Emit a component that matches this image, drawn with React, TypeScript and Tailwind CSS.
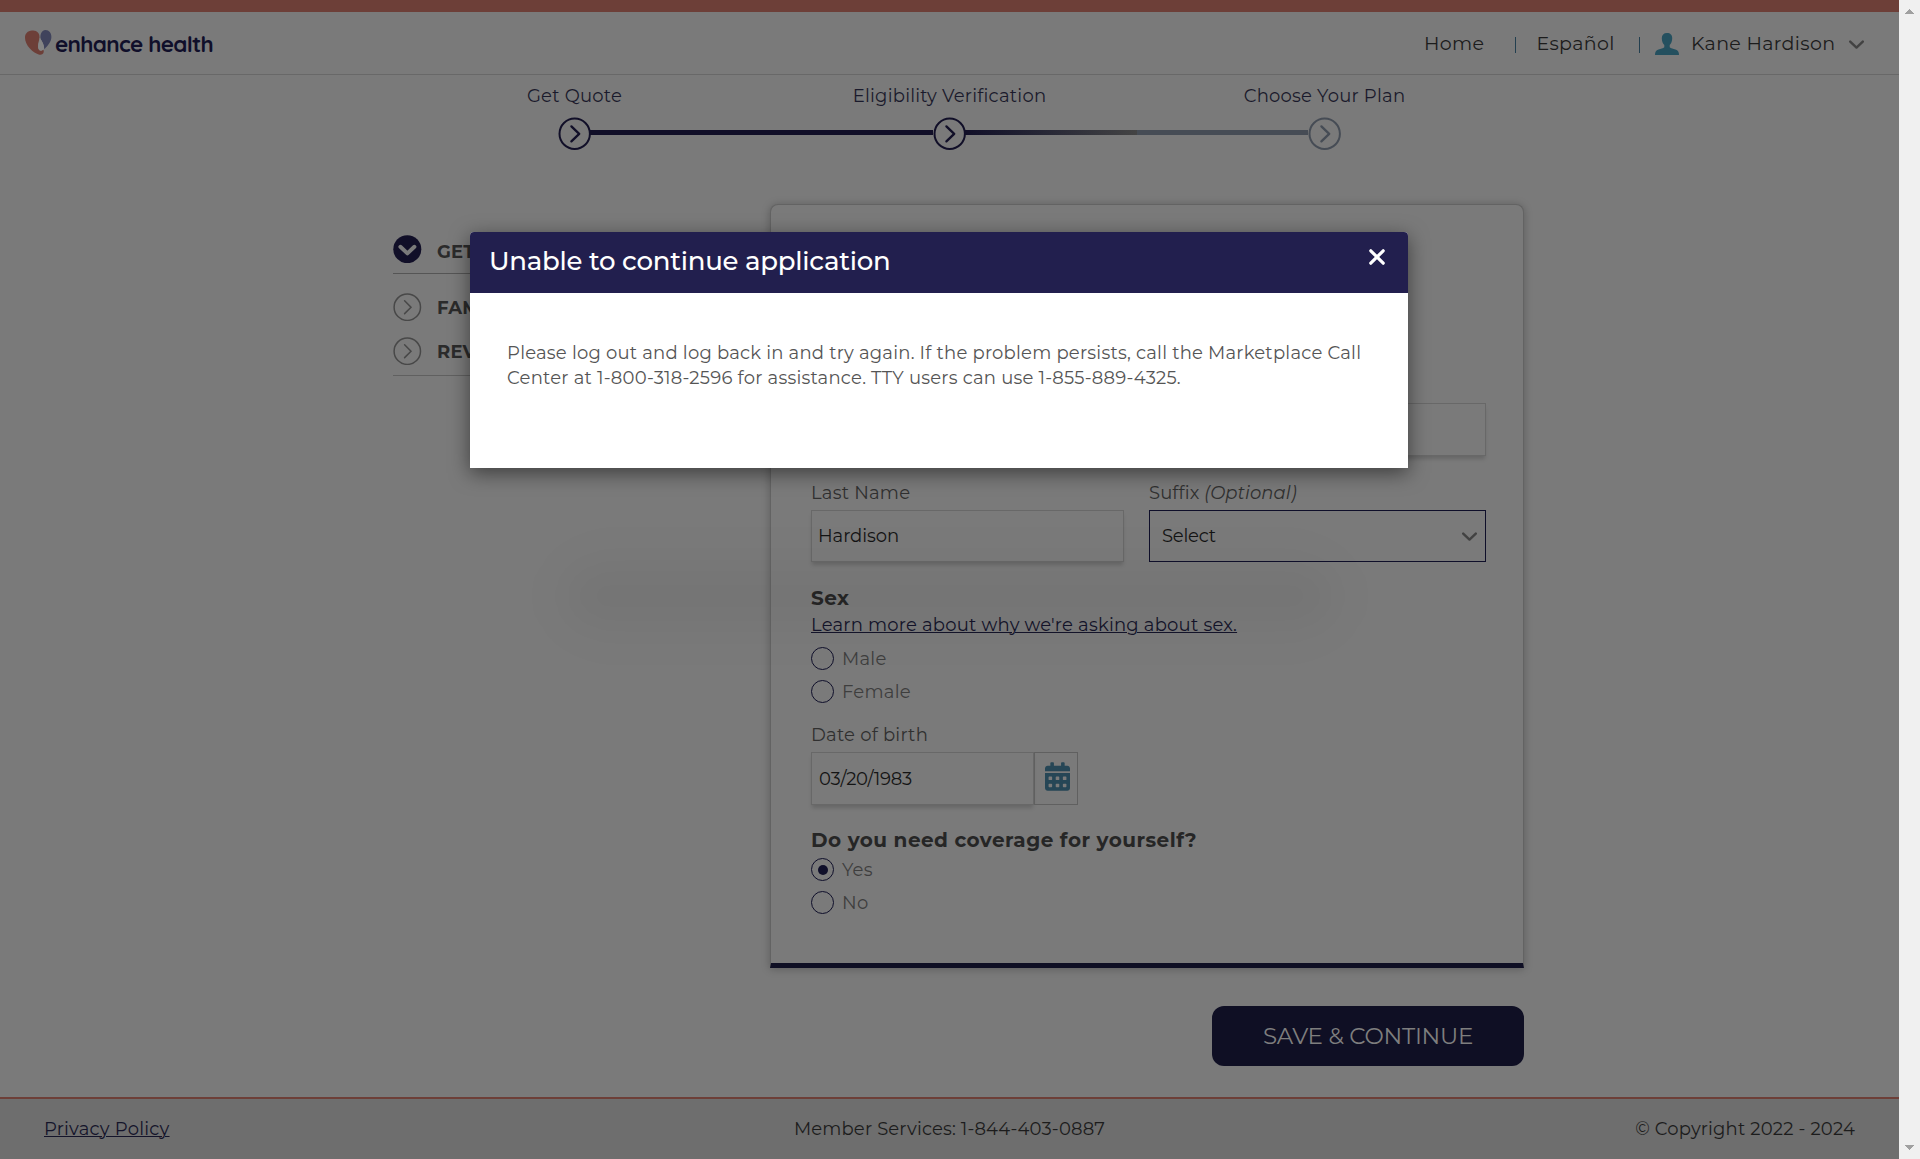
import React from 'react';
import { FaCalendarAlt } from 'react-icons/fa';

function StepCircle({ color }: { color: string }) {
  return (
    <svg width="33" height="33" viewBox="0 0 33 33" fill="none" stroke={color} strokeWidth="2" className="shrink-0">
      <circle cx="16.7" cy="16.8" r="15.2" />
      <path d="M13.4 9.4 21.200 16.900l-7.800 7.500" strokeWidth="2.3" strokeLinecap="round" strokeLinejoin="round" />
    </svg>
  );
}

function SideItem({ label, active = false }: { label: string; active?: boolean }) {
  return (
    <div className="flex h-7 items-center">
      <svg width="29" height="28" viewBox="0 0 29 28" fill="none" className="shrink-0">
        {active ? (
          <>
            <circle cx="14.3" cy="14.2" r="14" fill="#110f28" />
            <path d="m7.4 11.8 7 6.6 7-6.6" stroke="#7a7a7a" strokeWidth="4" strokeLinecap="round" strokeLinejoin="round" />
          </>
        ) : (
          <>
            <circle cx="14.3" cy="14.2" r="13.2" stroke="#484848" strokeWidth="1.5" />
            <path d="m11.6 7.8 6.4 6.4-6.4 6.4" stroke="#484848" strokeWidth="1.5" strokeLinecap="round" />
          </>
        )}
      </svg>
      <span className={`ml-[15px] text-[18px] font-bold leading-6 tracking-[0.2px] text-[#2b2b2b] ${active ? 'mt-[5px]' : 'mt-[2px]'}`}>{label}</span>
    </div>
  );
}

function Chevron() {
  return (
    <svg width="16" height="10" viewBox="0 0 16 10" fill="none" className="shrink-0">
      <path d="m2.200 1.600 6.300 6 6.300-6" stroke="#424242" strokeWidth="2.400" strokeLinecap="round" strokeLinejoin="round" />
    </svg>
  );
}

function Radio({ label, checked = false }: { label: string; checked?: boolean }) {
  return (
    <div className="flex h-[23px] items-center">
      <span className="flex size-[23px] items-center justify-center rounded-full border border-[#0f0f2a]">
        {checked && <span className="size-[10px] rounded-full bg-[#0f0f2a]" />}
      </span>
      <span className="ml-[8px] tracking-[0.250px] text-[#3e3e3e]">{label}</span>
    </div>
  );
}

const fieldBox = 'border border-[#686868] shadow-[0_4px_4px_-1px_rgba(0,0,0,0.16)]';

export default function App() {
  return (
    <div className="relative flex h-[1159px] w-[1920px] overflow-hidden bg-[#7a7a7a] font-['Montserrat','Inter',sans-serif] text-[18px] font-normal leading-6 tracking-[0.220px] text-[#1c1c1c]">
      <div className="flex w-[1899px] flex-col">
        <div className="h-3 bg-[#6d3f38]" />
        <header className="flex h-[63px] items-center border-b border-[#686868] pl-[25px] text-[19px] tracking-[0.350px]">
          <svg width="27" height="26" viewBox="0 0 27 26" className="shrink-0">
            <path d="M7 .6C11.600 0 14.800 3 14.500 7.600 14.300 11 12.700 13 13 17c.3 3 2 4.500 4 3 1.300-1 2 .3 1.700 2-.4 2.400-2.600 3.200-5 2.500C8 22.800 0 15.500 0 7.800 0 3.600 2.600 1 7 .6Z" fill="#6d3f38" />
            <path d="M20.500.1C24 .3 26.500 3 26.400 7c-.1 5-3.600 8.600-7 12.200C19 15 17.500 13 15.800 9.200 14.600 5.600 16.300.2 20.500.1Z" fill="#40435c" />
            <path d="M14.800 7.800c2.500 3.500 4.500 7 4.300 11-.6 1.200-1.700 1.800-2.800 1.900-1.700.2-3.100-1.300-3.200-3.700-.1-3.500 1.600-5.600 1.700-9.200Z" fill="#858585" />
          </svg>
          <span className="ml-[3px] mt-[2px] font-['Quicksand','Inter',sans-serif] text-[22.500px] font-bold tracking-[-0.690px] text-[#100f2a]">enhance health</span>
          <nav className="ml-auto flex w-[475px] items-center">
            <span className="mt-[2px] w-[91px]">Home</span>
            <span className="mt-1 h-4 w-px bg-[#233f4f]" />
            <span className="ml-[20.500px] mt-[2px] w-[102.500px]">Español</span>
            <span className="mt-1 h-4 w-px bg-[#233f4f]" />
            <svg width="24" height="22" viewBox="0 0 24 22" fill="#24505f" className="ml-[15px] mt-[2px] shrink-0">
              <path d="M12 0c3.300 0 5.200 2 5.200 5 0 3.200-1 5.500-2.500 7v2.200c1 1.200 3.500 1.500 5.800 2.300 2.600 1 3.500 2.500 3.500 5.500H0c0-3 .9-4.500 3.500-5.500 2.300-.8 4.800-1.100 5.800-2.300V12C7.800 10.500 6.800 8.200 6.800 5c0-3 1.900-5 5.200-5Z" />
            </svg>
            <span className="ml-3 mt-[2px] w-[157px] whitespace-nowrap">Kane Hardison</span>
            <span className="mt-[4px] flex"><Chevron /></span>
          </nav>
        </header>

        <div className="mx-auto w-[1125px] pt-[8px] text-[#1a1a2c]">
          <div className="grid grid-cols-3 text-center leading-[27px]">
            <span>Get Quote</span>
            <span>Eligibility Verification</span>
            <span>Choose Your Plan</span>
          </div>
          <div className="mt-[7px] flex items-center px-[171px]">
            <StepCircle color="#110f28" />
            <span className="-ml-px mb-[2px] h-[5px] flex-1 bg-[#110f28]" />
            <StepCircle color="#110f28" />
            <span className="-ml-px mb-[2px] flex h-[5px] flex-1">
              <span className="flex-1 bg-gradient-to-r from-[#110f28] to-[#444444]" />
              <span className="flex-1 bg-[#464c55]" />
            </span>
            <StepCircle color="#464c55" />
          </div>
        </div>

        <main className="ml-[393px] mt-[54px] flex">
          <aside className="w-[377px] shrink-0 pt-[31px]">
            <div className="w-[340px] border-b border-[#555555] pb-[10px]">
              <SideItem label="GET" active />
            </div>
            <div className="flex w-[340px] flex-col gap-4 border-b border-[#606060] pb-[10px] pt-[19px]">
              <SideItem label="FAM" />
              <SideItem label="REV" />
            </div>
          </aside>
          <div className="w-[754px] shrink-0">
            <section className="h-[764px] rounded-t-lg border border-b-[5px] border-[#636363] border-b-[#0f0f24] bg-[#7a7a7a] pl-[40px] pr-[37px] shadow-[0_1px_8px_rgba(0,0,0,0.25)]">
              <div className="mt-[198px] grid grid-cols-[313px_337px] gap-x-[25px]">
                <div className={`h-[53px] ${fieldBox}`} />
                <div className={`h-[53px] ${fieldBox}`} />
              </div>
              <div className="mt-[25px] grid grid-cols-[313px_337px] gap-x-[25px]">
                <label className="text-[#303030]">Last Name</label>
                <label className="tracking-[0.080px] text-[#303030]">Suffix <i>(Optional)</i></label>
                <div className={`mt-[5px] flex h-[52px] items-center pl-[6px] tracking-[-0.050px] text-[#141414] ${fieldBox}`}>Hardison</div>
                <div className="mt-[5px] flex h-[52px] items-center justify-between border border-[#0f0f2a] pl-[12px] pr-2 tracking-[-0.250px] text-[#141414]">
                  Select <span className="mt-[2px] flex"><Chevron /></span>
                </div>
              </div>
              <h3 className="mt-6 text-[20px] font-bold leading-6 tracking-[0.450px] text-[#262626]">Sex</h3>
              <a className="mt-[3px] block text-[#14142a] underline decoration-1 underline-offset-1">Learn more about why we're asking about sex.</a>
              <div className="mt-[10px] flex flex-col gap-[10px]">
                <Radio label="Male" />
                <Radio label="Female" />
              </div>
              <label className="mt-[20px] block text-[#303030]">Date of birth</label>
              <div className="mt-[5px] flex h-[53px]">
                <div className={`flex w-[223px] items-center pl-[7px] tracking-[-0.250px] text-[#141414] ${fieldBox}`}>03/20/1983</div>
                <div className="flex w-11 items-center justify-center border border-[#606060] pb-1 pl-[2px]">
                  <FaCalendarAlt className="h-[29px] w-[25px]" color="#264656" />
                </div>
              </div>
              <h3 className="mt-[23px] text-[20px] font-bold leading-6 tracking-[0.450px] text-[#262626]">Do you need coverage for yourself?</h3>
              <div className="mt-[6px] flex flex-col gap-[10px]">
                <Radio label="Yes" checked />
                <Radio label="No" />
              </div>
            </section>
            <button className="ml-auto mt-[38px] flex h-[60px] w-[312px] items-center justify-center rounded-xl bg-[#0f0f24] text-[23px] tracking-[-0.270px] text-[#7e7e7e]">
              SAVE &amp; CONTINUE
            </button>
          </div>
        </main>

        <footer className="mt-[31px] grid h-[62px] grid-cols-3 items-center border-t-2 border-[#6d3f38] bg-[#6e6e6e] pl-[44px] pr-[44px]">
          <a className="text-[#14142a] underline decoration-1 underline-offset-1">Privacy Policy</a>
          <span className="text-center tracking-[0.150px]">Member Services: 1-844-403-0887</span>
          <span className="text-right tracking-[0.180px]">© Copyright 2022 - 2024</span>
        </footer>
      </div>

      <div className="flex w-[21px] flex-col items-center justify-between bg-[#f0f0f0] pb-[9px] pt-[9px]">
        <svg width="9" height="5" viewBox="0 0 9 5" fill="#a0a0a0" shapeRendering="crispEdges"><path d="M4.500 0 9 5H0Z" /></svg>
        <svg width="9" height="5" viewBox="0 0 9 5" fill="#a0a0a0" shapeRendering="crispEdges"><path d="M4.500 5 9 0H0Z" /></svg>
      </div>

      <div className="absolute left-[575px] top-[576px] h-[40px] w-[750px] rounded-full bg-black/4 shadow-[0_0_40px_16px_rgba(0,0,0,0.035)] blur-[16px]" />

      <div role="dialog" className="absolute left-[470px] top-[232px] h-[236px] w-[938px] rounded-t bg-white shadow-[0_5px_20px_rgba(0,0,0,0.5)]">
        <div className="flex h-[61px] justify-between rounded-t bg-[#221f4e] pl-[19px] pr-[23px]">
          <h2 className="text-[26px] font-medium leading-[58px] tracking-[-0.240px] text-white">Unable to continue application</h2>
          <svg width="16" height="16" viewBox="0 0 16 16" className="mt-[17px]" stroke="#ffffff" strokeWidth="3.200" strokeLinecap="round">
            <path d="m1.800 1.800 12.400 12.400M14.200 1.800 1.800 14.200" />
          </svg>
        </div>
        <p className="ml-[37px] mt-[48px] w-[870px] leading-[25px] text-[#555555]">
          Please log out and log back in and try again. If the problem persists, call the Marketplace Call
          <br />
          Center at 1-800-318-2596 for assistance. TTY users can use 1-855-889-4325.
        </p>
      </div>
    </div>
  );
}
